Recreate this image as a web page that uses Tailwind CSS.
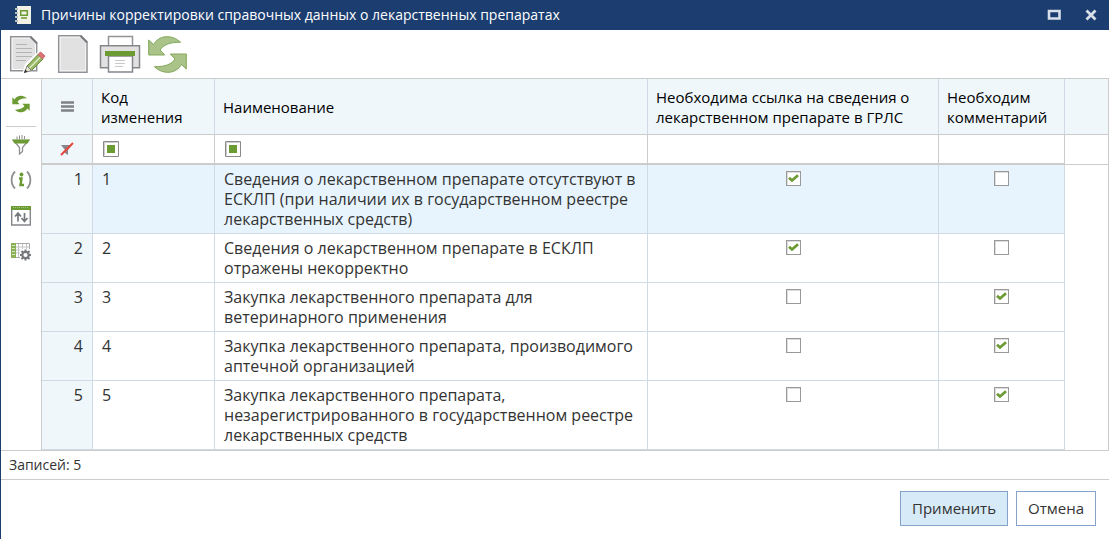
<!DOCTYPE html>
<html lang="ru">
<head>
<meta charset="utf-8">
<title>Причины корректировки справочных данных о лекарственных препаратах</title>
<script src="https://cdn.jsdelivr.net/npm/@tailwindcss/browser@4"></script>
</head>
<body class="bg-white font-['Open_Sans','Noto_Sans',sans-serif] text-[#333]">
<svg class="hidden">
  <symbol id="check" viewBox="0 0 15 15"><path d="M3 6.800 6 9.500 12 4.300" fill="none" stroke="#6c9a33" stroke-width="2.800"/></symbol>
  <symbol id="square" viewBox="0 0 16 16"><path d="M.5.5h15v15H.5z" fill="#fff" stroke="#8a8a8a"/><path d="M1.5 14.500V1.500h13" fill="none" stroke="#ccc"/><path d="M4 4h8v8H4z" fill="#6c9a33"/></symbol>
  <symbol id="refresh" viewBox="0 0 39 39"><path d="M.7 5v15h16L12 15c3-5 10-8 20.600-7.700C24-1 11 0 5.500 9.500z"/><path d="M.7 5v15h16L12 15c3-5 10-8 20.600-7.700C24-1 11 0 5.500 9.500z" transform="rotate(180 19.500 19.500)"/></symbol>
</svg>
<div class="flex min-h-screen flex-col border-l border-[#1b3d70]">
  <header class="flex h-[30px] items-center bg-[#1b3d70] pl-3.5 pr-3 text-white">
    <svg class="mr-2.5 h-[18px] w-4" viewBox="0 0 16 18"><path d="M2 0h14v18H2z" fill="#f1f1e6"/><path d="M0 2h3v2H0zM0 6h3v2H0zM0 10h3v2H0zM0 14h3v2H0z" fill="#b9c0c0"/><path d="M5.700 4.700h6.600v4.600H5.700zM6 12h6" fill="none" stroke="#6c9a33" stroke-width="1.500"/></svg>
    <h1 class="flex-1 text-sm">Причины корректировки справочных данных о лекарственных препаратах</h1>
    <button aria-label="Развернуть" class="mr-6"><svg class="h-3 w-[14px]" viewBox="0 0 14 12"><path d="M2 2h10.500v7.500H2z" fill="none" stroke="#d8dfe9" stroke-width="2.600"/></svg></button>
    <button aria-label="Закрыть"><svg class="size-3" viewBox="0 0 12 12"><path d="m1.500 1.500 9 9m0-9-9 9" stroke="#d8dfe9" stroke-width="2.800"/></svg></button>
  </header>

  <nav class="flex h-12 items-center gap-[9px] pl-2" aria-label="Действия">
    <button aria-label="Изменить"><svg class="h-10 w-[38px]" viewBox="0 0 38 40"><path d="M1.700 2.700h20l6 6v28h-26z" fill="#fff" stroke="#909295" stroke-width="1.500"/><path d="M3.500 4.500h17.500l5 5v25.500H3.500z" fill="#e1e1e1"/><path d="m21.500 3 6.500 6.500" stroke="#77797c" stroke-width="2"/><path d="M7 10.500h11M7 14.500h16M7 18.500h16M7 22.500h16M7 26.500h10" stroke="#b4b4b4"/><path d="M13 40.500 16 30 30.500 16.500l6.500 6-14.500 14z" fill="#fff"/><path d="m18 32 11-11.500 5 4.500-11.500 11.500z" fill="#98b765" stroke="#678b3a"/><path d="m20.500 34 11-11" stroke="#ddeac4" stroke-width="1.500"/><path d="m18 32-2.500 6.500 7-2z" fill="#e7e6cf" stroke="#808080"/><path d="m15 39 1.200-3.500 2.300 2.300z" fill="#333"/><path d="m29 20.500 2.500-2.500 4.500 4-2.500 3z" fill="#e27176" stroke="#bd686c"/></svg></button>
    <button aria-label="Создать"><svg class="h-10 w-[34px]" viewBox="0 0 34 40"><path d="M2.700 1.700h22.300l6 6v30.600H2.700z" fill="#fff" stroke="#909295" stroke-width="1.500"/><path d="M4.500 3.500h19.500l5.500 5.500v27.500h-25z" fill="#e1e1e1"/><path d="m24.500 2 6.500 6.500" stroke="#77797c" stroke-width="2"/></svg></button>
    <button aria-label="Печать"><svg class="h-10 w-[42px]" viewBox="0 0 42 40"><path d="M9.500 2.500h24v12h-24z" fill="#fff" stroke="#929497" stroke-width="1.500"/><path d="M1.500 11.700h39v22h-39z" fill="#e1e1e1" stroke="#85878a" stroke-width="1.500"/><path d="M6 17h30v5H6z" fill="#6c9a33"/><path d="M9.500 22h24v16h-24z" fill="#fff" stroke="#85878a" stroke-width="1.500"/><path d="M6 17h30v5H6z" fill="#6c9a33"/><path d="M16 26.500h10M16 29.500h10M16 32.500h8" stroke="#c9c9c9"/></svg></button>
    <button aria-label="Обновить" class="-ml-0.5"><svg class="size-[39px] fill-[#a9c388] stroke-[#82a75a]"><use href="#refresh"/></svg></button>
  </nav>

  <main class="flex border-y border-r border-[#ccc]">
    <aside class="flex w-[41px] shrink-0 flex-col items-center border-r border-[#ccc] pt-4" aria-label="Инструменты таблицы">
      <button aria-label="Обновить таблицу"><svg class="size-[18px] fill-[#6c9a33]"><use href="#refresh"/></svg></button>
      <div class="mt-[13px] h-px w-[30px] bg-[#ccc]"></div>
      <button aria-label="Фильтр" class="mt-2"><svg class="h-5 w-[18px]" viewBox="0 0 18 20"><path d="M1.500 5.500h15l-6 7v4l-3 2.500v-6.500z" fill="#fff" stroke="#8f8f8f" stroke-width="1.300"/><path d="M0 4.500h18l-2.500 4h-13z" fill="#6c9a33"/><path d="M5 1.500v3M7.500.5v4M10 0v4M12.500 1v3" stroke="#8f8f8f"/></svg></button>
      <button aria-label="Информация" class="mt-[15px]"><svg class="h-5 w-[22px]" viewBox="0 0 22 20"><path d="M5 1.500C.5 6 .5 14 5 18.500M17 1.500c4.500 4.500 4.500 12.500 0 17" fill="none" stroke="#8f8f8f" stroke-width="1.800"/><circle cx="11.500" cy="4.500" r="1.900" fill="#6c9a33"/><path d="M9 8.500h2.500l-1 6.500H14" fill="none" stroke="#6c9a33" stroke-width="2.400"/></svg></button>
      <button aria-label="Сортировка" class="mt-4"><svg class="h-5 w-5" viewBox="0 0 20 20"><path d="M.7 1h18.600v18H.7z" fill="#fff" stroke="#85878a" stroke-width="1.400"/><path d="M0 0h20v4H0z" fill="#6c9a33"/><path d="M2 1.500h16" stroke="#a7c47f" stroke-dasharray="1 1"/><path d="M7 15.500V8m-3 2.500L7 7l3 3.500M13.500 7v7.500M10.500 12l3 3.500 3-3.500" fill="none" stroke="#76797c" stroke-width="1.700"/></svg></button>
      <button aria-label="Настройка столбцов" class="mt-[15px]"><svg class="h-5 w-5" viewBox="0 0 20 20"><path d="M.5 2.500h18v14H.5z" fill="#fff" stroke="#aaa"/><path d="M0 6h18M0 9h18M0 12h18M7.500 3v13M11.500 3v13M15.500 3v13" stroke="#c4c4c4"/><path d="M0 2h5v15H0z" fill="#8bb056"/><path d="M1 4.500h3M1 7.500h3M1 10.500h3M1 13.500h3" stroke="#d5e5bd"/><path d="M9 8h11v12H9z" fill="#fff"/><circle cx="14.500" cy="14" r="3.200" fill="none" stroke="#76797c" stroke-width="2.200"/><path d="M14.500 8.500v2M14.500 17.500v2M9 14h2M18 14h2M10.500 10l1.700 1.700M16.800 16.300l1.700 1.700M18.500 10l-1.700 1.700M12.200 16.300 10.500 18" stroke="#76797c" stroke-width="2"/></svg></button>
    </aside>

    <div class="flex-1">
    <table class="w-full table-fixed border-separate border-spacing-0 text-base leading-5">
      <colgroup><col class="w-[51px]"><col class="w-[122px]"><col><col class="w-[291px]"><col class="w-[126px]"><col class="w-[43px]"></colgroup>
      <thead class="text-left text-[15px] leading-5 text-black [&_th]:border-b [&_th]:border-[#ccc] [&_th]:font-normal">
        <tr class="h-14 bg-[#eff7fb] [&>th]:px-2 [&>th:not(:last-child)]:border-r [&>th:not(:last-child)]:border-r-[#d0dae4]">
          <th scope="col"><button class="mx-auto block" aria-label="Меню"><svg class="h-[11px] w-[13px]" viewBox="0 0 13 11"><path d="M0 1.500h13M0 5.500h13M0 9.500h13" stroke="#808285" stroke-width="2.600"/></svg></button></th>
          <th scope="col">Код изменения</th>
          <th scope="col">Наименование</th>
          <th scope="col">Необходима ссылка на сведения о лекарственном препарате в ГРЛС</th>
          <th scope="col">Необходим комментарий</th>
          <th></th>
        </tr>
        <tr class="h-[30px] [&>th:not(:last-child)]:border-b-2 [&>th:not(:last-child)]:border-r [&>th]:px-2.5">
          <th class="bg-[#eff7fb]"><button class="mx-auto block" aria-label="Сбросить фильтр"><svg class="h-[14px] w-[14px]" viewBox="0 0 14 14"><path d="M1 3h11L8 8v5l-3-2V8z" fill="#85878a"/><path d="m1 13 12-12" stroke="#e8453c" stroke-width="1.900"/></svg></button></th>
          <th><button class="block" aria-label="Фильтр по коду"><svg class="size-4"><use href="#square"/></svg></button></th>
          <th><button class="block" aria-label="Фильтр по наименованию"><svg class="size-4"><use href="#square"/></svg></button></th>
          <th></th><th></th><th></th>
        </tr>
      </thead>
      <tbody class="align-top [&_td]:border-b [&_td]:border-r [&_td]:border-[#d0dae4] [&_td]:px-[9px] [&_td]:py-1 [&_td:first-child]:bg-[#eff7fb] [&_td:first-child]:text-right [&_td:last-child]:border-0 [&_td:last-child]:bg-white" id="rows"></tbody>
    </table>
    </div>
  </main>

  <p class="flex h-[29px] items-center border-b border-[#ccc] pl-2 text-sm">Записей: 5</p>
  <footer class="flex justify-end gap-2 px-[13px] py-[11px] text-[15px]">
    <button class="h-[35px] border border-[#84a3cb] bg-[#d7eaf7] px-[11px]">Применить</button>
    <button class="h-[35px] border border-[#84a3cb] bg-white px-[11px]">Отмена</button>
  </footer>
</div>
<script>
  const rows = [
    ['Сведения о лекарственном препарате отсутствуют в ЕСКЛП (при наличии их в государственном реестре лекарственных средств)', true, false],
    ['Сведения о лекарственном препарате в ЕСКЛП отражены некорректно', true, false],
    ['Закупка лекарственного препарата для ветеринарного применения', false, true],
    ['Закупка лекарственного препарата, производимого аптечной организацией', false, true],
    ['Закупка лекарственного препарата, незарегистрированного в государственном реестре лекарственных средств', false, true],
  ];
  const box = (on, label) => `<label class="mx-auto mt-0.5 grid size-[15px]"><input type="checkbox" aria-label="${label}" class="peer col-start-1 row-start-1 size-[15px] appearance-none border border-[#999] bg-white shadow-[inset_1px_1px_0_#ddd]"${on ? ' checked' : ''}><svg class="pointer-events-none invisible col-start-1 row-start-1 size-[15px] peer-checked:visible"><use href="#check"/></svg></label>`;
  document.getElementById('rows').innerHTML = rows.map(([name, link, note], i) =>
    `<tr class="${i ? '' : 'bg-[#e7f4fd]'}"><td>${i + 1}</td><td>${i + 1}</td><td>${name}</td><td>${box(link, 'Необходима ссылка')}</td><td>${box(note, 'Необходим комментарий')}</td><td></td></tr>`).join('');
</script>
</body>
</html>
